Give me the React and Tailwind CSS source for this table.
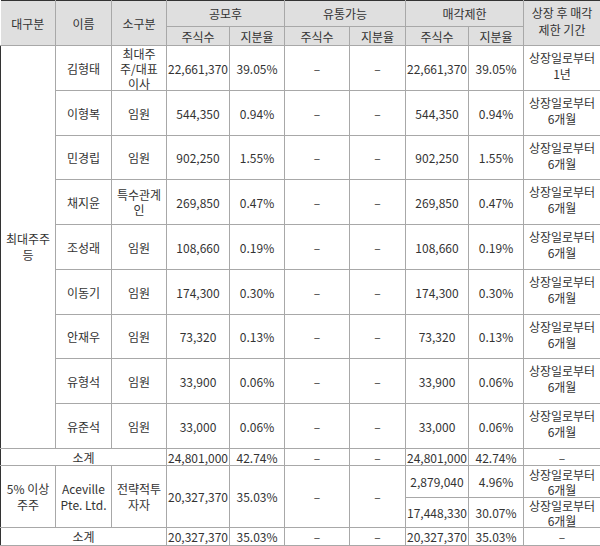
import React from "react";

const font = { fontFamily: '"Noto Sans CJK KR", "Noto Sans", sans-serif' };

const rows = [
  { name: "김형태", sub: ["최대주", "주/대표", "이사"], n: "22,661,370", p: "39.05%", period: ["상장일로부터", "1년"], h: 45 },
  { name: "이형복", sub: ["임원"], n: "544,350", p: "0.94%", period: ["상장일로부터", "6개월"], h: 45 },
  { name: "민경립", sub: ["임원"], n: "902,250", p: "1.55%", period: ["상장일로부터", "6개월"], h: 44 },
  { name: "채지윤", sub: ["특수관계", "인"], n: "269,850", p: "0.47%", period: ["상장일로부터", "6개월"], h: 45 },
  { name: "조성래", sub: ["임원"], n: "108,660", p: "0.19%", period: ["상장일로부터", "6개월"], h: 45 },
  { name: "이동기", sub: ["임원"], n: "174,300", p: "0.30%", period: ["상장일로부터", "6개월"], h: 45 },
  { name: "안재우", sub: ["임원"], n: "73,320", p: "0.13%", period: ["상장일로부터", "6개월"], h: 44 },
  { name: "유형석", sub: ["임원"], n: "33,900", p: "0.06%", period: ["상장일로부터", "6개월"], h: 45 },
  { name: "유준석", sub: ["임원"], n: "33,000", p: "0.06%", period: ["상장일로부터", "6개월"], h: 45 },
];

const Lines = ({ items }) =>
  items.map((t, i) => (
    <React.Fragment key={i}>
      {i > 0 && <br />}
      {t}
    </React.Fragment>
  ));

const base = "border border-[#a8a8a8] p-0 text-center align-middle whitespace-nowrap font-normal";

function Cell({ h, className = "", inner = "", rowSpan, colSpan, head, children }) {
  const Tag = head ? "th" : "td";
  return (
    <Tag
      rowSpan={rowSpan}
      colSpan={colSpan}
      className={base + (head ? " bg-[#dfdfdf]" : "") + " " + className}
    >
      <div
        className={"flex items-center justify-center overflow-visible " + inner}
        style={{ height: h - 1 }}
      >
        <div>{children}</div>
      </div>
    </Tag>
  );
}

const R = " border-r-[#333]";
const L = " border-l-[#333]";
const D = "–";

export default function App() {
  return (
    <div className="w-[600px] h-[546px] bg-white text-[#333] text-[12px] leading-[15px] overflow-hidden" style={font}>
      <table className="w-[600px] border-collapse table-fixed border-t border-t-[#333]">
        <colgroup>
          <col className="w-[55px]" />
          <col className="w-[56px]" />
          <col className="w-[55px]" />
          <col className="w-[63px]" />
          <col className="w-[55px]" />
          <col className="w-[65px]" />
          <col className="w-[56px]" />
          <col className="w-[63px]" />
          <col className="w-[55px]" />
          <col className="w-[77px]" />
        </colgroup>
        <thead>
          <tr>
            <Cell head h={45} rowSpan={2} className="border-l-0 border-t-[#333]">대구분</Cell>
            <Cell head h={45} rowSpan={2} className="border-t-[#333]">이름</Cell>
            <Cell head h={45} rowSpan={2} className="border-t-[#333]">소구분</Cell>
            <Cell head h={26} colSpan={2} className="border-t-[#333]">공모후</Cell>
            <Cell head h={26} colSpan={2} className="border-t-[#333]">유통가능</Cell>
            <Cell head h={26} colSpan={2} className="border-t-[#333]">매각제한</Cell>
            <Cell head h={45} rowSpan={2} className={"border-t-[#333]" + R} inner="leading-[17px] -translate-y-[2px]">
              상장 후 매각<br />제한 기간
            </Cell>
          </tr>
          <tr>
            <Cell head h={19}>주식수</Cell>
            <Cell head h={19}>지분율</Cell>
            <Cell head h={19}>주식수</Cell>
            <Cell head h={19}>지분율</Cell>
            <Cell head h={19}>주식수</Cell>
            <Cell head h={19}>지분율</Cell>
          </tr>
        </thead>
        <tbody>
          {rows.map((r, i) => (
            <tr key={i}>
              {i === 0 && (
                <Cell h={403} rowSpan={9} className={L} inner="leading-[16px]">
                  최대주주<br />등
                </Cell>
              )}
              <Cell h={r.h}>{r.name}</Cell>
              <Cell h={r.h} inner="leading-[15px]">
                <Lines items={r.sub} />
              </Cell>
              <Cell h={r.h}>{r.n}</Cell>
              <Cell h={r.h}>{r.p}</Cell>
              <Cell h={r.h}>{D}</Cell>
              <Cell h={r.h}>{D}</Cell>
              <Cell h={r.h}>{r.n}</Cell>
              <Cell h={r.h}>{r.p}</Cell>
              <Cell h={r.h} className={R} inner="leading-[16px] -translate-y-[2px]">
                <Lines items={r.period} />
              </Cell>
            </tr>
          ))}
          <tr>
            <Cell h={17} colSpan={3} className={L}>소계</Cell>
            <Cell h={17}>24,801,000</Cell>
            <Cell h={17}>42.74%</Cell>
            <Cell h={17}>{D}</Cell>
            <Cell h={17}>{D}</Cell>
            <Cell h={17}>24,801,000</Cell>
            <Cell h={17}>42.74%</Cell>
            <Cell h={17} className={R}>{D}</Cell>
          </tr>
          <tr>
            <Cell h={62} rowSpan={2} className={L + " border-t-dashed"} inner="leading-[16px]">
              5% 이상<br />주주
            </Cell>
            <Cell h={62} rowSpan={2} className="border-t-dashed" inner="leading-[16px]">
              Aceville<br />Pte. Ltd.
            </Cell>
            <Cell h={62} rowSpan={2} className="border-t-dashed" inner="leading-[16px]">
              전략적투<br />자자
            </Cell>
            <Cell h={62} rowSpan={2} className="border-t-dashed">20,327,370</Cell>
            <Cell h={62} rowSpan={2} className="border-t-dashed">35.03%</Cell>
            <Cell h={62} rowSpan={2} className="border-t-dashed">{D}</Cell>
            <Cell h={62} rowSpan={2} className="border-t-dashed">{D}</Cell>
            <Cell h={32} className="border-t-dashed">2,879,040</Cell>
            <Cell h={32} className="border-t-dashed">4.96%</Cell>
            <Cell h={32} className={R + " border-t-dashed"} inner="leading-[15px]">
              상장일로부터<br />6개월
            </Cell>
          </tr>
          <tr>
            <Cell h={30}>17,448,330</Cell>
            <Cell h={30}>30.07%</Cell>
            <Cell h={30} className={R} inner="leading-[15px]">
              상장일로부터<br />6개월
            </Cell>
          </tr>
          <tr>
            <Cell h={18} colSpan={3} className={L}>소계</Cell>
            <Cell h={18}>20,327,370</Cell>
            <Cell h={18}>35.03%</Cell>
            <Cell h={18}>{D}</Cell>
            <Cell h={18}>{D}</Cell>
            <Cell h={18}>20,327,370</Cell>
            <Cell h={18}>35.03%</Cell>
            <Cell h={18} className={R}>{D}</Cell>
          </tr>
        </tbody>
      </table>
    </div>
  );
}
